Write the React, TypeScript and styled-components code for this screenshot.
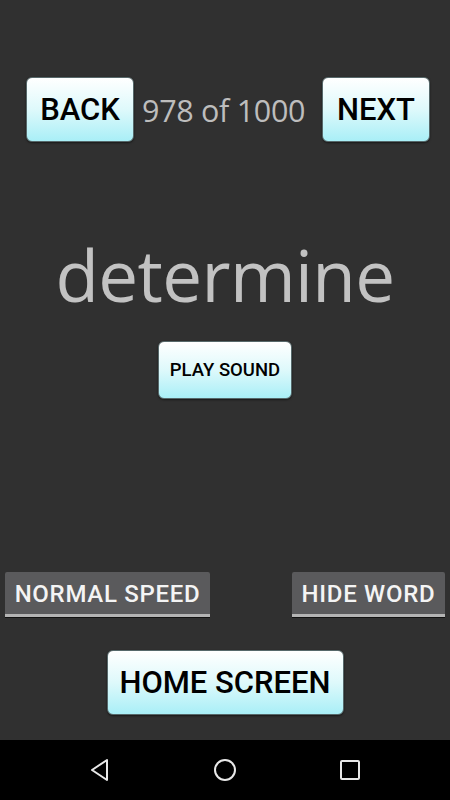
import React from 'react';
import styled, { createGlobalStyle } from 'styled-components';

const GlobalStyle = createGlobalStyle`
	html, body {
		margin: 0;
		padding: 0;
		background: #303030;
	}
`;

const Screen = styled.div`
	width: 450px;
	height: 800px;
	display: flex;
	flex-direction: column;
	background-color: #303030;
	font-family: Roboto, 'Liberation Sans', sans-serif;
	overflow: hidden;
`;

const Content = styled.div`
	flex: 1;
	display: flex;
	flex-direction: column;
	align-items: center;
`;

const TopRow = styled.div`
	display: flex;
	align-items: center;
	align-self: stretch;
	padding: 0 20px 0 26px;
	margin-top: 77px;
`;

const CyanButton = styled.button<{ w: number; h: number; size: number }>`
	box-sizing: border-box;
	width: ${(p) => p.w}px;
	height: ${(p) => p.h}px;
	padding: 0;
	border: 1px solid #56686a;
	border-radius: 6px;
	background: linear-gradient(to bottom, #ffffff 0%, #def9fb 50%, #a9eff7 100%);
	box-shadow: 0 1px 2px rgba(0, 0, 0, 0.5);
	color: #000;
	font-family: Roboto, 'Liberation Sans', sans-serif;
	font-size: ${(p) => p.size}px;
	font-weight: 500;
	cursor: pointer;
	flex-shrink: 0;
`;

const Counter = styled.div`
	flex: 1;
	padding-left: 8px;
	color: #bdbdbd;
	font-family: 'Open Sans', 'DejaVu Sans', sans-serif;
	font-size: 30.5px;
	letter-spacing: -0.3px;
	white-space: nowrap;
`;

const Word = styled.div`
	margin-top: 88px;
	color: #c2c2c2;
	font-family: 'Open Sans', 'DejaVu Sans', sans-serif;
	font-size: 71px;
	line-height: 90px;
	letter-spacing: -0.6px;
`;

const PlayWrap = styled.div`
	margin-top: 21px;
`;

const OptionRow = styled.div`
	display: flex;
	justify-content: space-between;
	align-self: stretch;
	padding: 0 5px;
	margin-top: 173px;
`;

const GrayButton = styled.button<{ w: number }>`
	box-sizing: border-box;
	width: ${(p) => p.w}px;
	height: 45px;
	padding: 2px 0 0;
	border: none;
	border-radius: 2px 2px 0 0;
	background: #5a5a5c;
	border-bottom: 3px solid #b4b4b4;
	box-shadow: 0 1px 0 #111;
	color: #f4f4f4;
	font-family: Roboto, 'Liberation Sans', sans-serif;
	font-size: 24px;
	font-weight: 500;
	letter-spacing: 0.7px;
	white-space: nowrap;
	cursor: pointer;
`;

const HomeWrap = styled.div`
	margin-top: 33px;
`;

const NavBar = styled.div`
	height: 60px;
	background: #000;
	display: flex;
	align-items: center;
	justify-content: center;
	gap: 101px;
`;

const NavIcon = styled.svg`
	width: 24px;
	height: 24px;
	stroke: #e8e8e8;
	stroke-width: 2;
	fill: none;
`;

export default function App() {
	return (
		<Screen>
			<GlobalStyle />
			<Content>
				<TopRow>
					<CyanButton w={108} h={65} size={31}>BACK</CyanButton>
					<Counter>978 of 1000</Counter>
					<CyanButton w={108} h={65} size={31}>NEXT</CyanButton>
				</TopRow>
				<Word>determine</Word>
				<PlayWrap>
					<CyanButton w={134} h={58} size={18.5}>PLAY SOUND</CyanButton>
				</PlayWrap>
				<OptionRow>
					<GrayButton w={205}>NORMAL SPEED</GrayButton>
					<GrayButton w={153}>HIDE WORD</GrayButton>
				</OptionRow>
				<HomeWrap>
					<CyanButton w={237} h={65} size={31}>HOME SCREEN</CyanButton>
				</HomeWrap>
			</Content>
			<NavBar>
				<NavIcon viewBox='0 0 24 24'>
					<path d='M19 2 L4 12 L19 22 Z' strokeLinejoin='round' />
				</NavIcon>
				<NavIcon viewBox='0 0 24 24'>
					<circle cx='12' cy='12' r='10' />
				</NavIcon>
				<NavIcon viewBox='0 0 24 24'>
					<rect x='3' y='3' width='18' height='18' rx='1' />
				</NavIcon>
			</NavBar>
		</Screen>
	);
}
